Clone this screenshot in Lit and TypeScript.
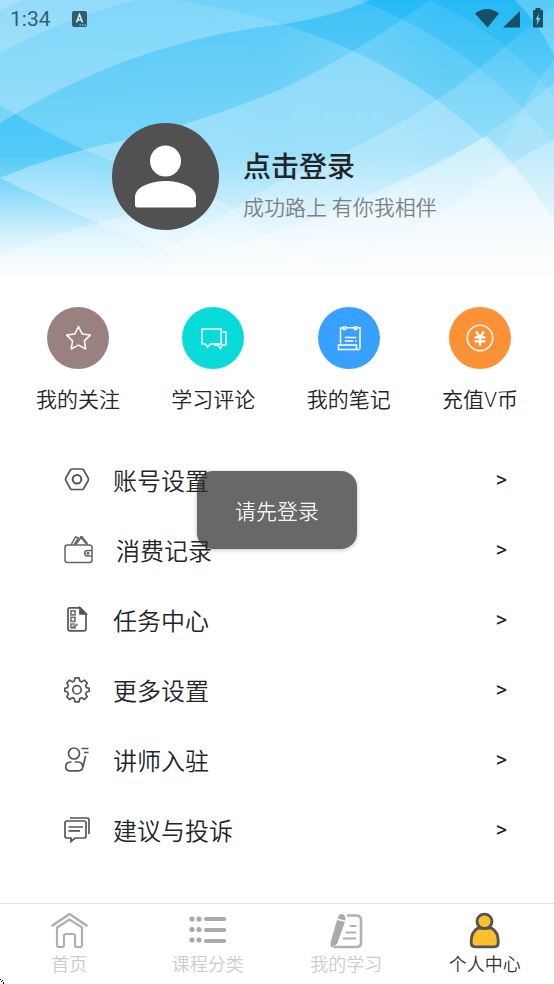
import { LitElement, html, css, svg } from "lit";
import { customElement, property } from "lit/decorators.js";

const shortcutIcons = [
  svg`<path d="M30.500 20.500l3.600 7.400 8.200 1.200-5.900 5.800 1.400 8.100-7.300-3.800-7.300 3.800 1.400-8.100-5.900-5.800 8.200-1.200z" stroke-linejoin="round" transform="translate(1 -1)"/>`,
  svg`<path d="M20.200 22h19v15h-11l-2.500 3-2.500-3h-3z M40.500 25h3.500v13h-3.500l-2 3.500-2.500-3.500h-4"/>`,
  svg`<path d="M28 20.800h8M22.500 36.500v-15.500h2.500M39 20.800h3v21M41.500 42.500h-21v-4.500h18v4.500M26.800 30.500h11.500M26.800 34h8.500M37 34h1.500"/><path d="M25.500 19v3.500h2v-3.500M36.500 19v3.500h2v-3.500"/>`,
  svg`<circle cx="31" cy="31" r="12.700"/><path d="M27 24.500l4 6 4-6M31 31v8M25.500 30.300h11M25.500 34.300h11" stroke-width="2.300"/>`,
];

const shortcuts = [
  { label: "我的关注", tone: "mauve" },
  { label: "学习评论", tone: "cyan" },
  { label: "我的笔记", tone: "blue" },
  { label: "充值V币", tone: "orange" },
];

const menu = [
  {
    label: "账号设置",
    width: 26,
    icon: svg`<path d="M8 3h10q1 0 1.500.8l4.700 8.200q.5 1.500 0 2.500l-4.700 8.200q-.5.8-1.500.8h-10q-1 0-1.500-.8l-4.700-8.200q-.5-1.500 0-2.500l4.700-8.200q.5-.8 1.500-.8z"/><circle cx="13" cy="13.200" r="4.300" stroke-width="2"/>`,
  },
  {
    label: "消费记录",
    width: 29,
    icon: svg`<g stroke="#666370" stroke-width="1.500"><rect x="1" y="9" width="27" height="17.500" rx="2.500"/><path d="M7 9l4.500-8 3 1-4.500 7M11.500 9l5.500-7.500 6.500 7.500M16 1l2-.3 5.500 7"/><path d="M28 14.500h-4.500a2.800 2.800 0 0 0 0 5.600h4.500"/><circle cx="24" cy="17.300" r=".8"/></g>`,
  },
  {
    label: "任务中心",
    width: 26,
    icon: svg`<path d="M6 1.800h10l6 6v14.500q0 2.500-2 2.500h-14q-2 0-2-2v-19q0-2 2-2z"/><path d="M16 1.800v6h6z" fill="#555"/><path d="M7 4.800h4v4h-4zM7 11.300h4v4h-4zM11 18h-4v4h4v-2M8.500 20l1.500 1 3.500-3" stroke="#777"/>`,
  },
  {
    label: "更多设置",
    width: 26,
    icon: svg`<path d="M11 1.800h4l.7 3.200 2 .9 2.800-1.800 2.700 2.900-1.600 2.600.9 2 2.700.7v3l-2.700.7-.9 2 1.600 2.600-2.700 2.900-2.800-1.800-2 .9-.7 3.200h-4l-.7-3.200-2-.9-2.800 1.800-2.700-2.900 1.600-2.600-.9-2-2.700-.7v-3l2.700-.7.9-2-1.600-2.600 2.700-2.900 2.800 1.800 2-.9z" stroke-linejoin="round"/><circle cx="13" cy="13.800" r="4.200"/>`,
  },
  {
    label: "讲师入驻",
    width: 26,
    icon: svg`<circle cx="10" cy="7.500" r="5.500"/><path d="M7.500 16q-5.800 0-5.800 4.800 0 4 4 4h8.500q4.500 0 4.500-4 0-4.800-5.500-4.800h-2.500M21.500 10l-2.500 11M17.500 2.500h7M20 6.500h4.500"/>`,
  },
  {
    label: "建议与投诉",
    width: 26,
    icon: svg`<path d="M3 5h17q2 0 2 2v13q0 2-2 2h-9l-4 3.500v-3.500h-4q-2 0-2-2v-13q0-2 2-2zM6 2h17q2 0 2 2v14M4.500 11h14.500M4.500 14.800h11.500"/>`,
  },
];

const tabs = [
  {
    label: "首页",
    icon: svg`<g fill="none" stroke="#b0b0b0" stroke-width="2.200" stroke-linecap="round" stroke-linejoin="round"><path d="M1.500 13.500l17-11.500 17 11.500" stroke-width="2.600"/><path d="M6 15.500v17.500q0 2 2 2h3q2 0 2-2v-9q0-2 2-2h7q2 0 2 2v9q0 2 2 2h3q2 0 2-2v-17.500l-12.500-8z"/></g>`,
  },
  {
    label: "课程分类",
    icon: svg`<g fill="#aaa"><circle cx="3" cy="7" r="2.600"/><circle cx="10" cy="7" r="2.600"/><circle cx="3" cy="17.500" r="2.600"/><circle cx="10" cy="17.500" r="2.600"/><circle cx="3" cy="28" r="2.600"/><circle cx="10" cy="28" r="2.600"/></g><path d="M17 7h18M17 18h18M17 29h18" stroke="#aaa" stroke-width="4.200" stroke-linecap="round"/>`,
  },
  {
    label: "我的学习",
    icon: svg`<g fill="none" stroke="#b0b0b0" stroke-width="2.600" stroke-linecap="round"><path d="M20 3.500h8q5 0 5 4.500v23q0 4-4.500 4h-22"/><path d="M22.500 14h5M18.500 20.500h9M15.500 26.500h12" stroke-width="2"/></g><path d="M9 8l8 2-8 22-6 3.500-.5-5z" fill="#aaa"/><path d="M9.800 6.500q.7-4.500 4-4.500 4.500 1 3.600 6.500z" fill="#aaa"/>`,
  },
  {
    label: "个人中心",
    icon: svg`<g fill="#fcbf2d" stroke="#545454" stroke-width="2.800"><path d="M12 16q-6.800 4-6.800 13v2q0 3.800 3.800 3.800h19.400q3.800 0 3.800-3.800v-2q0-9-6.800-13z"/><ellipse cx="18.500" cy="9.300" rx="7.500" ry="7.200"/></g>`,
  },
];

@customElement("menu-row")
class MenuRow extends LitElement {
  @property() label = "";
  @property({ type: Number }) iconWidth = 26;
  @property({ attribute: false }) icon: unknown;

  static styles = css`
    :host { display: block; }
    .row {
      display: flex; align-items: center; width: 100%; height: 70px;
      padding: 0 47px 0 64px; border: 0; background: none;
      font: inherit; color: #212529; text-align: left;
    }
    .icon { flex: none; height: 28px; fill: none; stroke: #555; stroke-width: 1.7; }
    .label { flex: 1; margin-left: 23px; font-size: 24px; line-height: 36px; }
    .arrow { font-family: Roboto, sans-serif; font-size: 22px; line-height: 28px; font-weight: 400; }
  `;

  render() {
    return html`<button class="row" type="button">
      <svg class="icon" width=${this.iconWidth} height="28" viewBox="0 0 ${this.iconWidth} 28" aria-hidden="true">${this.icon}</svg>
      <span class="label">${this.label}</span><span class="arrow">&gt;</span>
    </button>`;
  }
}

@customElement("app-root")
class AppRoot extends LitElement {
  static styles = css`
    :host {
      display: flex; flex-direction: column; position: relative;
      min-height: 100vh; background: #fff; color: #212529; overflow: hidden;
      font-family: "Noto Sans CJK SC", sans-serif; font-weight: 350;
    }
    *, *::before { box-sizing: border-box; }
    .header { display: grid; height: 278px; }
    .waves, .headcontent { grid-area: 1 / 1; width: 100%; height: 100%; min-height: 0; }
    .headcontent { position: relative; }
    .status {
      display: flex; align-items: center; height: 38px; padding: 0 9px 0 10px;
      font-family: Roboto, sans-serif; font-size: 21px; font-weight: 400; color: #345f71;
    }
    .badge { margin-left: 21px; }
    .signals { margin-left: auto; }
    .profile { display: flex; align-items: center; gap: 24px; padding: 85px 24px 0 112px; }
    .avatar { flex: none; }
    .login { display: flex; flex-direction: column; padding: 16px 0 0; border: 0; background: none; font: inherit; text-align: left; }
    .title { font-size: 28px; line-height: 42px; font-weight: 500; color: #212529; }
    .motto { font-size: 21px; line-height: 40px; color: #808080; }
    .shortcuts { display: flex; justify-content: space-between; padding: 29px 36px 0; }
    .shortcut {
      display: flex; flex-direction: column; align-items: center; gap: 15px;
      padding: 0; border: 0; background: none; font: inherit;
      font-family: Roboto, "Noto Sans CJK SC", sans-serif;
      font-size: 21px; line-height: 32px; color: #212529;
    }
    .disc { border-radius: 50%; fill: none; stroke: #fff; stroke-width: 1.5; }
    .mauve { background: #9b8080; }
    .cyan { background: #09dada; }
    .blue { background: #38a0ff; }
    .orange { background: #fd9138; }
    .menu { padding-top: 29px; }
    .tabs { display: flex; height: 81px; margin-top: auto; border-top: 1px solid #e2e2e2; }
    .tab {
      flex: 1; display: flex; flex-direction: column; align-items: center;
      padding-top: 8px; text-decoration: none; color: #ccc;
      font-size: 18px; line-height: 28px;
    }
    .active { color: #333; }
    .overlay { position: fixed; inset: 36px 0 0; display: grid; place-items: center; pointer-events: none; }
    .toast {
      padding: 23px 38px; border-radius: 16px; background: rgba(48, 48, 48, 0.73);
      box-shadow: 0 1px 4px rgba(0, 0, 0, 0.25);
      font-size: 21px; line-height: 32px; color: #f2f2f2;
    }
    .pointer { position: absolute; left: 0; bottom: 0; }
  `;

  private waves() {
    return html`<svg class="waves" viewBox="0 0 554 278" preserveAspectRatio="none" aria-hidden="true">
      <defs>
        <linearGradient id="sky" x1="0" y1="0" x2="0" y2="1">
          <stop offset="0" stop-color="#25baf6"/><stop offset=".35" stop-color="#45c5f7"/>
          <stop offset=".56" stop-color="#54caf8"/><stop offset=".7" stop-color="#8fdcfa"/>
          <stop offset=".84" stop-color="#d2f0fd"/><stop offset="1" stop-color="#fff"/>
        </linearGradient>
        <linearGradient id="fadeRight" gradientUnits="userSpaceOnUse" x1="0" y1="0" x2="554" y2="0">
          <stop offset="0" stop-color="#fff" stop-opacity=".34"/><stop offset=".55" stop-color="#fff" stop-opacity=".24"/>
          <stop offset=".8" stop-color="#fff" stop-opacity=".08"/><stop offset="1" stop-color="#fff" stop-opacity=".08"/>
        </linearGradient>
        <linearGradient id="fadeLeft" gradientUnits="userSpaceOnUse" x1="0" y1="0" x2="554" y2="0">
          <stop offset="0" stop-color="#fff" stop-opacity=".1"/><stop offset=".5" stop-color="#fff" stop-opacity=".12"/>
          <stop offset=".7" stop-color="#fff" stop-opacity=".24"/><stop offset="1" stop-color="#fff" stop-opacity=".24"/>
        </linearGradient>
        <linearGradient id="fadeUp" gradientUnits="userSpaceOnUse" x1="0" y1="0" x2="0" y2="278">
          <stop offset="0" stop-color="#fff" stop-opacity=".05"/><stop offset=".3" stop-color="#fff" stop-opacity=".16"/>
          <stop offset="1" stop-color="#fff" stop-opacity=".3"/>
        </linearGradient>
      </defs>
      <rect width="554" height="278" fill="url(#sky)"/>
      <path d="M175 0Q430 38 554 221V278H340Q200 185 110 160Q60 142 0 105V0Z" fill="url(#fadeLeft)"/>
      <path d="M0 178Q60 153 125 140Q190 126 277 91Q350 58 430 0Q505 34 554 97V278H230Q90 222 0 178Z" fill="url(#fadeRight)"/>
      <path d="M277 182Q400 133 480 68L554 5V278H120Z" fill="url(#fadeUp)"/>
      <g fill="#fff">
        <path opacity=".26" d="M0 0H370Q330 18 277 25Q130 42 0 123Z"/>
        <path opacity=".17" d="M0 0H135Q60 20 0 53Z"/>
        <path opacity=".2" d="M0 0H22L0 10Z"/>
        <path opacity=".12" d="M357 0Q470 40 554 143V278H340Q200 185 110 160Q60 142 0 105V0Z"/>
        <path opacity=".35" d="M487 136Q525 173 554 221V278H130Q330 225 487 136Z"/>
        <path opacity=".16" d="M340 217Q460 158 523 108L554 83V278H260Z"/>
        <path opacity=".24" d="M515 0Q540 25 554 55V0Z"/>
        <path opacity=".13" d="M554 60Q530 90 523 108Q490 175 430 225V278H554Z"/>
        <path opacity=".25" d="M554 140Q510 160 470 195Q390 245 330 278H554Z"/>
        <path opacity=".3" d="M0 255Q100 215 219 200Q270 240 360 278H0Z"/>
      </g>
    </svg>`;
  }

  render() {
    return html`
      <header class="header">
        ${this.waves()}
        <div class="headcontent">
          <div class="status">
            <span>1:34</span>
            <svg class="badge" width="15" height="16" viewBox="0 0 15 16" aria-hidden="true">
              <rect width="15" height="16" rx="2" fill="#335d6e"/>
              <path d="M4.500 11.500l3-8 3 8M5.500 9h4" fill="none" stroke="#c8effc" stroke-width="1.600"/>
              <path d="M7.500 14h1.500M10 14h1.500M12.500 14h1.500" stroke="#9edbf5"/>
            </svg>
            <svg class="signals" width="70" height="22" viewBox="0 0 70 22" fill="#174f65" aria-hidden="true">
              <path d="M0 5.500Q12-3.500 24 5.500L12.500 19.500Z"/><path d="M45 3v16.500H28z"/>
              <path d="M60.500 0h5v2h1.500q1 0 1 1v15.500q0 1-1 1h-8q-1 0-1-1v-15.500q0-1 1-1h1.500z"/>
              <path d="M64.500 5l-4 6.500h2l-1 6 4-7.500h-2.500z" fill="#79d4f5"/>
            </svg>
          </div>
          <div class="profile">
            <svg class="avatar" width="107" height="107" viewBox="0 0 107 107" aria-hidden="true">
              <circle cx="53.500" cy="53.500" r="53.500" fill="#515151"/>
              <circle cx="53.500" cy="38" r="15.500" fill="#fff"/>
              <path d="M23 74C23 63 41 58 53.500 58S84 63 84 74v8q0 2.500-2.500 2.500h-56q-2.500 0-2.500-2.500z" fill="#fff"/>
            </svg>
            <button class="login" type="button">
              <span class="title">点击登录</span><span class="motto">成功路上 有你我相伴</span>
            </button>
          </div>
        </div>
      </header>
      <section class="shortcuts">
        ${shortcuts.map((s, i) => html`<button class="shortcut" type="button">
          <svg class="disc ${s.tone}" width="62" height="62" viewBox="0 0 62 62" aria-hidden="true">${shortcutIcons[i]}</svg>
          <span>${s.label}</span>
        </button>`)}
      </section>
      <main class="menu">
        ${menu.map((m) => html`<menu-row .label=${m.label} .iconWidth=${m.width} .icon=${m.icon}></menu-row>`)}
      </main>
      <nav class="tabs">
        ${tabs.map((t, i) => html`<a class="tab ${i === 3 ? "active" : ""}" href="#tab${i}">
          <svg width="37" height="37" viewBox="0 0 37 37" aria-hidden="true">${t.icon}</svg>
          <span>${t.label}</span>
        </a>`)}
      </nav>
      <div class="overlay"><div class="toast" role="status">请先登录</div></div>
      <svg class="pointer" width="5" height="5" viewBox="0 0 5 5" aria-hidden="true"><path d="M0 0h1v1H0zM1 2h1v1H1zM2 1h1v1H2zM3 3h1v2H3z"/></svg>
    `;
  }
}
